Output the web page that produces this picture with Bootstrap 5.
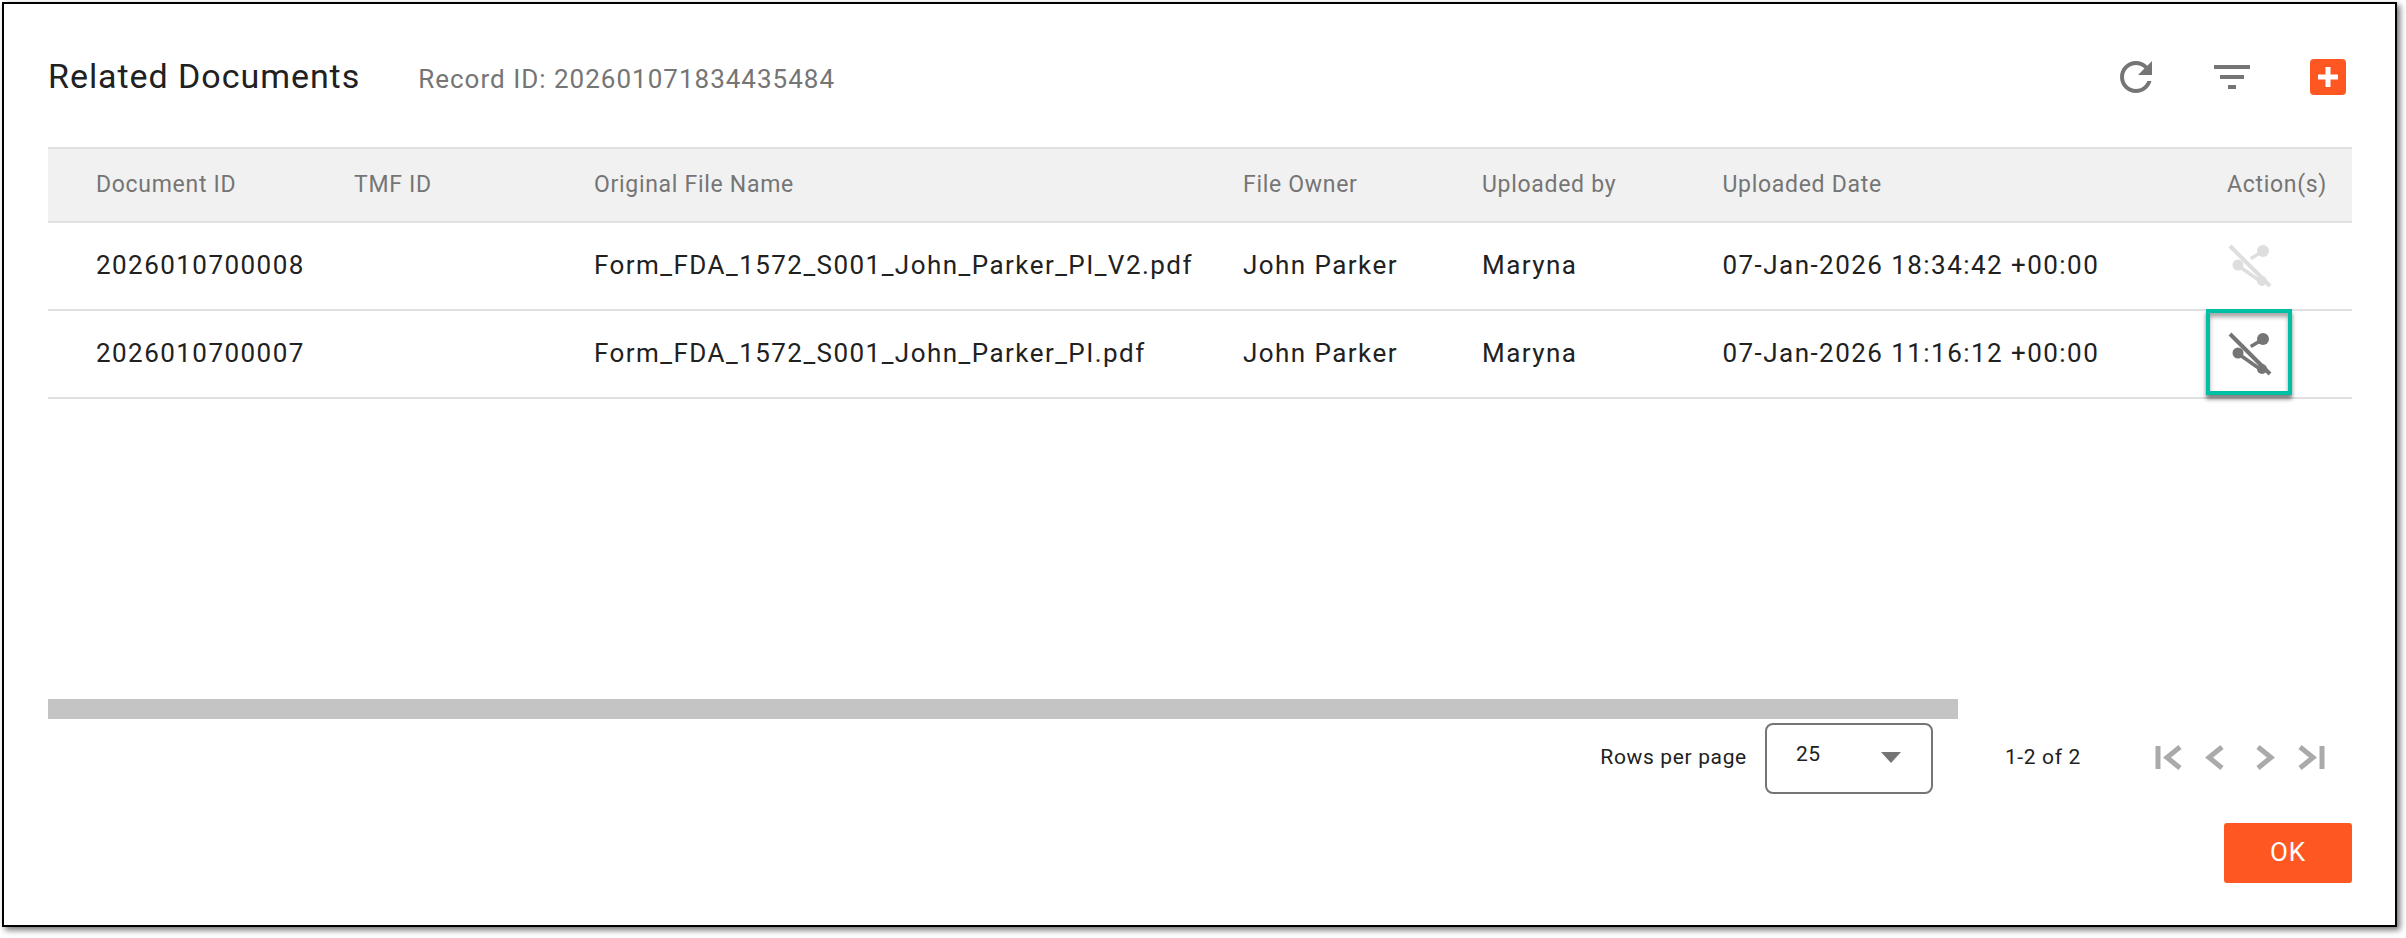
<!doctype html>
<html lang="en">
<head>
  <meta charset="UTF-8">
  <title>Related Documents</title>
  <link href="https://cdn.jsdelivr.net/npm/bootstrap@5.3.0/dist/css/bootstrap.min.css" rel="stylesheet">
  <style>
    body {
      margin: 0;
      padding: 2px 0 0 2px;
      height: 938px;
      overflow: hidden;
      background: #fff;
      font-family: Roboto, "Liberation Sans", sans-serif;
    }
    .dlg-frame {
      width: 2395px;
      height: 925px;
      background: #fff;
      border: 2.5px solid #000;
      box-shadow: 3px 3px 6px rgba(0, 0, 0, .55);
      padding: 0 42px 0 44px;
    }
    .dlg-head {
      height: 143px;
      padding: 46px 7px 0 0;
    }
    .dlg-title {
      font-size: 34px;
      letter-spacing: .95px;
      line-height: 52px;
      color: #212121;
      margin: 0 58px 0 0;
      font-weight: 400;
    }
    .dlg-record {
      font-size: 26px;
      letter-spacing: 1px;
      color: #757575;
    }
    .dlg-tools { gap: 48px; margin-top: 2.5px; }
    .dlg-tools svg { display: block; }
    .add-btn {
      width: 36px;
      height: 36px;
      margin: 6px 0 0 6px;
      padding: 0;
      background: #ff5722;
      border: 0;
      border-radius: 4px;
    }
    .docs-wrap { height: 551.5px; }
    .docs-table {
      table-layout: fixed;
      width: 2304px;
      margin: 0;
      font-size: 26px;
      letter-spacing: 1.45px;
    }
    .docs-table th, .docs-table td {
      padding: 0 0 0 48px;
      vertical-align: middle;
      border-bottom: 2.5px solid #e0e0e0;
      color: #212121;
      white-space: nowrap;
    }
    .docs-table th {
      height: 74px;
      background: #f1f1f1;
      border-top: 2.5px solid #e0e0e0;
      font-size: 23px;
      font-weight: 400;
      letter-spacing: .7px;
      color: #757575;
    }
    .docs-table th:last-child { padding-left: 49px; }
    .docs-table td { height: 88px; padding-bottom: 2px; }
    .docs-table td svg { display: block; }
    .act-cell { position: relative; }
    .call-out {
      position: absolute;
      left: 28px;
      top: -2px;
      width: 86px;
      height: 86px;
      border: 4px solid #00bfa5;
      box-shadow: 0 4px 4px rgba(0, 0, 0, .5), inset 0 4px 4px rgba(0, 0, 0, .35);
    }
    .h-scroll {
      width: 1910px;
      height: 20px;
      background: #c4c4c4;
    }
    .pager-row {
      height: 71px;
      margin-top: 4px;
      padding-right: 25px;
      font-size: 21px;
      letter-spacing: .65px;
      color: #212121;
    }
    .rows-sel {
      width: 168px;
      height: 71px;
      margin: 0 72px 0 18px;
      padding: 14px 30px 0 29px;
      border: 2px solid #757575;
      border-radius: 8px;
    }
    .sel-arrow {
      width: 0;
      height: 0;
      margin-top: 13px;
      border-left: 10px solid transparent;
      border-right: 10px solid transparent;
      border-top: 11px solid #757575;
    }
    .pager-btns { gap: 16px; margin-left: 71px; }
    .pager-btns svg { display: block; }
    .ok-row { margin-top: 29px; padding-right: 1px; }
    .ok-btn {
      width: 128px;
      height: 60px;
      padding: 0;
      background: #ff5722;
      border: 0;
      border-radius: 3px;
      color: #fff;
      font-size: 26px;
      letter-spacing: .8px;
    }
    .ok-btn:hover { background: #ff5722; color: #fff; }
  </style>
</head>
<body>
  <svg width="0" height="0" class="position-absolute">
    <symbol id="share-off" viewBox="0 0 48 48">
      <line x1="4" y1="5" x2="44" y2="45" stroke="currentColor" stroke-width="4"/>
      <circle cx="37" cy="10" r="6" fill="currentColor"/>
      <line x1="24.7" y1="17.6" x2="34" y2="12" stroke="currentColor" stroke-width="3.5"/>
      <circle cx="12" cy="24" r="5.5" fill="currentColor"/>
      <circle cx="36" cy="40" r="5" fill="currentColor"/>
      <line x1="14" y1="26" x2="34" y2="40" stroke="currentColor" stroke-width="3.5"/>
    </symbol>
  </svg>

  <div class="dlg-frame">
    <div class="dlg-head d-flex align-items-start">
      <div class="d-flex align-items-baseline">
        <h5 class="dlg-title">Related Documents</h5>
        <span class="dlg-record">Record ID: 202601071834435484</span>
      </div>
      <div class="dlg-tools d-flex align-items-start ms-auto">
        <svg width="48" height="48" viewBox="0 0 24 24" fill="#757575"><path d="M17.65 6.35C16.2 4.9 14.21 4 12 4c-4.42 0-7.99 3.58-7.99 8s3.57 8 7.99 8c3.73 0 6.84-2.55 7.73-6h-2.08c-.82 2.33-3.04 4-5.65 4-3.31 0-6-2.69-6-6s2.69-6 6-6c1.66 0 3.14.69 4.22 1.78L13 11h7V4l-2.35 2.35z"/></svg>
        <svg width="48" height="48" viewBox="0 0 24 24" fill="#757575"><path d="M10 18h4v-2h-4v2zM3 6v2h18V6H3zm3 7h12v-2H6v2z"/></svg>
        <button class="add-btn d-flex align-items-center justify-content-center" type="button">
          <svg width="36" height="36" viewBox="0 0 36 36" fill="#fff"><path d="M15.5 8h5v7.5H28v5h-7.5V28h-5v-7.5H8v-5h7.5z"/></svg>
        </button>
      </div>
    </div>

    <div class="docs-wrap">
      <table class="table docs-table">
        <colgroup>
          <col style="width:258px"><col style="width:240px"><col style="width:649px"><col style="width:239px"><col style="width:240.5px"><col style="width:503.5px"><col style="width:174px">
        </colgroup>
        <thead>
          <tr>
            <th>Document ID</th>
            <th>TMF ID</th>
            <th>Original File Name</th>
            <th>File Owner</th>
            <th>Uploaded by</th>
            <th>Uploaded Date</th>
            <th>Action(s)</th>
          </tr>
        </thead>
        <tbody>
          <tr>
            <td>2026010700008</td>
            <td></td>
            <td>Form_FDA_1572_S001_John_Parker_PI_V2.pdf</td>
            <td>John Parker</td>
            <td>Maryna</td>
            <td>07-Jan-2026 18:34:42 +00:00</td>
            <td class="act-cell"><svg width="48" height="48" style="color:#dedede"><use href="#share-off"/></svg></td>
          </tr>
          <tr>
            <td>2026010700007</td>
            <td></td>
            <td>Form_FDA_1572_S001_John_Parker_PI.pdf</td>
            <td>John Parker</td>
            <td>Maryna</td>
            <td>07-Jan-2026 11:16:12 +00:00</td>
            <td class="act-cell">
              <svg width="48" height="48" style="color:#757575"><use href="#share-off"/></svg>
              <div class="call-out"></div>
            </td>
          </tr>
        </tbody>
      </table>
    </div>

    <div class="h-scroll"></div>

    <div class="pager-row d-flex align-items-center justify-content-end">
      <span>Rows per page</span>
      <div class="rows-sel d-flex justify-content-between align-items-start">
        <span>25</span>
        <span class="sel-arrow"></span>
      </div>
      <span>1-2 of 2</span>
      <div class="pager-btns d-flex">
        <svg width="32" height="32" fill="none" stroke="#aaa" stroke-width="5"><path d="M6 4v23"/><path d="M28 5 15 15.5 28 26"/></svg>
        <svg width="32" height="32" fill="none" stroke="#aaa" stroke-width="5"><path d="M22 5 9 15.5 22 26"/></svg>
        <svg width="32" height="32" fill="none" stroke="#aaa" stroke-width="5"><path d="M10 5 23 15.5 10 26"/></svg>
        <svg width="32" height="32" fill="none" stroke="#aaa" stroke-width="5"><path d="M4 5 17 15.5 4 26"/><path d="M26 4v23"/></svg>
      </div>
    </div>

    <div class="ok-row d-flex justify-content-end">
      <button class="btn ok-btn" type="button">OK</button>
    </div>
  </div>
</body>
</html>
